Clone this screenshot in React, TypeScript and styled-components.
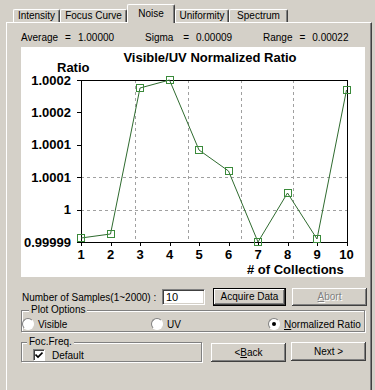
import styled, { createGlobalStyle } from 'styled-components';

const GlobalStyle = createGlobalStyle`
  html, body {
    margin: 0;
    padding: 0;
    background: #d4d0c8;
  }
  body {
    font-family: "Liberation Sans", Arial, sans-serif;
    font-size: 10px;
    color: #000;
  }
`;

const Window = styled.div`
  box-sizing: border-box;
  width: 375px;
  height: 390px;
  overflow: hidden;
  padding: 4px 0 0 6px;
  background: #d4d0c8;
`;

const TabStrip = styled.div`
  display: flex;
  align-items: flex-end;
  height: 18px;
  padding-left: 7px;
  position: relative;
  z-index: 1;
`;

const Tab = styled.div<{ $w: number; $active?: boolean }>`
  box-sizing: border-box;
  width: ${(p) => p.$w}px;
  height: ${(p) => (p.$active ? 19 : 13)}px;
  margin-bottom: ${(p) => (p.$active ? -1 : 0)}px;
  border-top: 1px solid #fff;
  border-left: 1px solid #fff;
  border-right: 1px solid #404040;
  border-radius: 2px 2px 0 0;
  box-shadow: inset -1px 0 #808080;
  background: #d4d0c8;
  display: flex;
  align-items: center;
  justify-content: center;
  line-height: 1;
  white-space: nowrap;
`;

const Panel = styled.div`
  box-sizing: border-box;
  width: 366px;
  height: 380px;
  border-top: 1px solid #fff;
  border-left: 1px solid #fff;
  border-right: 1px solid #404040;
  box-shadow: inset -1px 0 #808080;
  padding: 9px 0 0 14px;
`;

const StatsRow = styled.div`
  display: flex;
  height: 12px;
  line-height: 12px;
  margin-bottom: 3px;
  white-space: pre;
`;

const Stat = styled.div<{ $w?: number }>`
  width: ${(p) => (p.$w ? `${p.$w}px` : 'auto')};
  display: flex;
  gap: 7px;
`;

const ChartSvg = styled.svg`
  display: block;
  background: #fff;
  font-family: "Liberation Sans", Arial, sans-serif;
  font-weight: bold;
  font-size: 13px;
`;

const SampleRow = styled.div`
  display: flex;
  align-items: center;
  height: 18px;
  margin-top: 11px;
  padding-left: 1px;
`;

const FieldLabel = styled.span`
  width: 140px;
  white-space: nowrap;
`;

const TextInput = styled.div`
  box-sizing: border-box;
  width: 43px;
  height: 16px;
  background: #fff;
  border-top: 1px solid #808080;
  border-left: 1px solid #808080;
  border-right: 1px solid #fff;
  border-bottom: 1px solid #fff;
  box-shadow: inset 1px 1px #404040, inset -1px -1px #d4d0c8;
  padding: 2px 0 0 3px;
  font-size: 11px;
  line-height: 1;
`;

const Button = styled.div<{ $w: number; $h?: number; $default?: boolean; $disabled?: boolean; $ml?: number; $mt?: number }>`
  box-sizing: border-box;
  width: ${(p) => p.$w}px;
  height: ${(p) => p.$h ?? 18}px;
  margin-left: ${(p) => p.$ml ?? 0}px;
  margin-top: ${(p) => p.$mt ?? 0}px;
  display: flex;
  align-items: center;
  justify-content: center;
  background: #d4d0c8;
  border: ${(p) => (p.$default ? '1px solid #000' : 'none')};
  box-shadow: inset -1px -1px #404040, inset 1px 1px #fff, inset -2px -2px #808080;
  color: ${(p) => (p.$disabled ? '#808080' : '#000')};
  text-shadow: ${(p) => (p.$disabled ? '1px 1px #fff' : 'none')};
  white-space: nowrap;
  line-height: 1;
`;

const GroupBox = styled.div<{ $w: number; $h: number; $mt: number }>`
  box-sizing: border-box;
  position: relative;
  width: ${(p) => p.$w}px;
  height: ${(p) => p.$h}px;
  margin-top: ${(p) => p.$mt}px;
  border: 1px solid #808080;
  box-shadow: inset 1px 1px #fff, 1px 1px #fff;
`;

const Legend = styled.span<{ $left: number }>`
  position: absolute;
  top: -7px;
  left: ${(p) => p.$left}px;
  padding: 0 2px;
  background: #d4d0c8;
  line-height: 12px;
  white-space: nowrap;
`;

const RadioRow = styled.div`
  display: grid;
  grid-template-columns: 129px 117px auto;
  padding-top: 7px;
`;

const RadioItem = styled.div`
  display: flex;
  align-items: center;
  gap: 4px;
  height: 12px;
  white-space: nowrap;
`;

const RadioCircle = styled.span<{ $on?: boolean }>`
  box-sizing: border-box;
  width: 12px;
  height: 12px;
  border-radius: 50%;
  background: #fff;
  border: 1px solid;
  border-color: #808080 #fff #fff #808080;
  display: flex;
  align-items: center;
  justify-content: center;
  &::after {
    content: '';
    width: 4px;
    height: 4px;
    border-radius: 50%;
    background: ${(p) => (p.$on ? '#000' : 'transparent')};
  }
`;

const BottomRow = styled.div`
  display: flex;
  align-items: flex-start;
  margin-top: 10px;
`;

const CheckRow = styled.div`
  display: flex;
  align-items: center;
  gap: 7px;
  padding: 6px 0 0 11px;
`;

const CheckBox = styled.span`
  box-sizing: border-box;
  width: 12px;
  height: 12px;
  background: #fff;
  border: 1px solid;
  border-color: #808080 #fff #fff #808080;
  box-shadow: inset 1px 1px #404040;
  display: flex;
  align-items: center;
  justify-content: center;
`;

const Key = styled.span`
  text-decoration: underline;
`;

const ticksY = ['1.0002', '1.0002', '1.0001', '1.0001', '1', '0.99999'];
const values = [191, 187, 41, 33, 103, 124, 195, 146, 192, 43];
const gridX = [114, 167, 220, 272];
const PL = 60;
const PT = 33;
const PR = 326;
const PB = 195;
const px = (i: number) => PL + i * 29.5;
const py = (k: number) => PT + k * 32.4;

function Chart() {
  const points = values.map((v, i) => `${px(i)},${v}`).join(' ');
  return (
    <ChartSvg width={344} height={230} viewBox="0 0 344 230">
      <defs>
        <clipPath id="ratioClip">
          <rect x={0} y={16} width={120} height={20} />
        </clipPath>
      </defs>
      <text x={189} y={15} textAnchor="middle">Visible/UV Normalized Ratio</text>
      <text x={36} y={24.5} clipPath="url(#ratioClip)">Ratio</text>

      <g stroke="#a0a0a0" strokeDasharray="3 3" shapeRendering="crispEdges">
        {gridX.map((x) => (
          <line key={x} x1={x + 0.5} y1={PT} x2={x + 0.5} y2={PB} />
        ))}
        {[3, 4].map((k) => (
          <line key={k} x1={PL} y1={Math.round(py(k)) + 0.5} x2={PR} y2={Math.round(py(k)) + 0.5} />
        ))}
      </g>

      <rect x={PL + 0.5} y={PT + 0.5} width={PR - PL} height={PB - PT} fill="none" stroke="#000" shapeRendering="crispEdges" />

      <g stroke="#000" shapeRendering="crispEdges">
        {ticksY.map((_, k) => (
          <line key={k} x1={PL - 4} y1={Math.round(py(k)) + 0.5} x2={PL} y2={Math.round(py(k)) + 0.5} />
        ))}
        {values.map((_, i) => (
          <line key={i} x1={Math.round(px(i)) + 0.5} y1={PB} x2={Math.round(px(i)) + 0.5} y2={PB + 4} />
        ))}
      </g>

      {ticksY.map((t, k) => (
        <text key={k} x={50} y={py(k) + 4.6} textAnchor="end">{t}</text>
      ))}
      {values.map((_, i) => (
        <text key={i} x={px(i)} y={212} textAnchor="middle">{i + 1}</text>
      ))}
      <text x={226} y={227}># of Collections</text>

      <polyline points={points} fill="none" stroke="#2f6b2f" strokeWidth={1} />
      {values.map((v, i) => (
        <rect key={i} x={Math.round(px(i)) - 3.5} y={v - 3.5} width={7} height={7} fill="none" stroke="#3a8a3a" strokeWidth={1} />
      ))}
    </ChartSvg>
  );
}

export default function App() {
  return (
    <Window>
      <GlobalStyle />
      <TabStrip>
        <Tab $w={47}>Intensity</Tab>
        <Tab $w={67}>Focus Curve</Tab>
        <Tab $w={48} $active>Noise</Tab>
        <Tab $w={54}>Uniformity</Tab>
        <Tab $w={59}>Spectrum</Tab>
      </TabStrip>
      <Panel>
        <StatsRow>
          <Stat $w={124}>
            <span>Average</span>
            <span>=</span>
            <span>1.00000</span>
          </Stat>
          <Stat $w={118}>
            <span>Sigma </span>
            <span>=</span>
            <span>0.00009</span>
          </Stat>
          <Stat>
            <span>Range</span>
            <span>=</span>
            <span>0.00022</span>
          </Stat>
        </StatsRow>
        <Chart />
        <SampleRow>
          <FieldLabel>Number of Samples(1~2000) :</FieldLabel>
          <TextInput>10</TextInput>
          <Button $w={73} $ml={8} $default>Acquire Data</Button>
          <Button $w={75} $ml={6} $disabled>
            <Key>A</Key>bort
          </Button>
        </SampleRow>
        <GroupBox $w={344} $h={22} $mt={4}>
          <Legend $left={7}>Plot Options</Legend>
          <RadioRow>
            <RadioItem>
              <RadioCircle />
              Visible
            </RadioItem>
            <RadioItem>
              <RadioCircle />
              UV
            </RadioItem>
            <RadioItem>
              <RadioCircle $on />
              <span>
                <Key>N</Key>ormalized Ratio
              </span>
            </RadioItem>
          </RadioRow>
        </GroupBox>
        <BottomRow>
          <GroupBox $w={181} $h={20} $mt={0}>
            <Legend $left={5}>Foc.Freq.</Legend>
            <CheckRow>
              <CheckBox>
                <svg width="8" height="8" viewBox="0 0 8 8">
                  <path d="M0.5 3.5 L3 6 L7.5 1.5" fill="none" stroke="#000" strokeWidth="1.6" />
                </svg>
              </CheckBox>
              Default
            </CheckRow>
          </GroupBox>
          <Button $w={75} $h={19} $ml={9} $mt={1}>
            &lt; <Key>B</Key>ack
          </Button>
          <Button $w={75} $h={19} $ml={5}>Next &gt;</Button>
        </BottomRow>
      </Panel>
    </Window>
  );
}
